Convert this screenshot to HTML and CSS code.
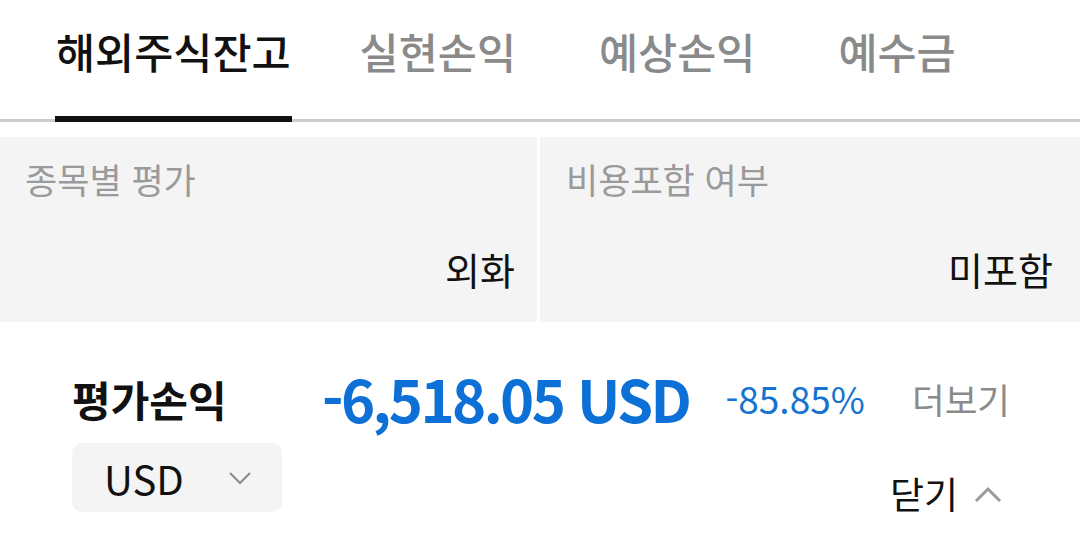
FILE: index.html
```html
<!DOCTYPE html>
<html lang="ko">
<head>
<meta charset="utf-8">
<link rel="stylesheet" href="styles.css">
</head>
<body>
<nav class="tabs">
  <div class="tab active">해외주식잔고</div>
  <div class="tab">실현손익</div>
  <div class="tab">예상손익</div>
  <div class="tab">예수금</div>
</nav>
<section class="panel">
  <div class="cell">
    <div class="cell-label">종목별 평가</div>
    <div class="cell-value">외화</div>
  </div>
  <div class="cell">
    <div class="cell-label">비용포함 여부</div>
    <div class="cell-value">미포함</div>
  </div>
</section>
<section class="summary">
  <div class="row">
    <div class="sum-label">평가손익</div>
    <div class="sum-value">-6,518.05 USD</div>
    <div class="sum-rate">-85.85%</div>
    <div class="more">더보기</div>
  </div>
  <div class="row row2">
    <div class="select">
      <span class="select-text">USD</span>
      <svg class="chev-down" width="24" height="14" viewBox="0 0 24 14"><path d="M2 2 L12 12 L22 2" fill="none" stroke="#8a8a8a" stroke-width="2"/></svg>
    </div>
    <div class="close">
      <span>닫기</span>
      <svg class="chev-up" width="28" height="17" viewBox="0 0 28 17"><path d="M2 15 L14 3 L26 15" fill="none" stroke="#9a9a9a" stroke-width="3"/></svg>
    </div>
  </div>
</section>
</body>
</html>
```
FILE: styles.css
```css
* { box-sizing: border-box; }
body {
  margin: 0;
  background: #fff;
  font-family: "Noto Sans CJK KR", "Noto Sans", sans-serif;
  color: #111;
  width: 1080px;
}
.tabs {
  display: flex;
  gap: 69px;
  padding-left: 56px;
  height: 122px;
  border-bottom: 3px solid #cdcdcd;
}
.tab {
  position: relative;
  font-size: 42.5px;
  font-weight: 500;
  color: #8a8a8a;
  padding-top: 22px;
  line-height: 58px;
  margin-right: 14px;
}
.tab.active {
  color: #111;
  margin-right: 0;
}
.tab.active::after {
  content: "";
  position: absolute;
  left: -1px;
  right: -1px;
  bottom: -3px;
  height: 6px;
  background: #111;
}
.panel {
  margin-top: 15px;
  display: flex;
  gap: 3px;
  height: 185px;
}
.cell {
  flex: 1;
  background: #f4f4f4;
  padding: 17px 24px 0 25px;
  display: flex;
  flex-direction: column;
}
.cell:first-child { flex: 0 0 537px; padding-right: 22px; }
.cell:last-child { padding-left: 26px; padding-right: 27px; }
.cell-label {
  font-size: 35px;
  color: #9a9a9a;
  line-height: 50px;
}
.cell-value {
  margin-top: 38px;
  font-size: 38px;
  line-height: 54px;
  text-align: right;
  color: #111;
}
.summary {
  padding: 46px 0 0 72px;
}
.row {
  display: flex;
  align-items: center;
  height: 60px;
}
.sum-label {
  width: 250px;
  font-size: 42px;
  font-weight: 700;
  color: #111;
}
.sum-value {
  font-size: 58px;
  font-weight: 700;
  color: #0d70d6;
  letter-spacing: -2.6px;
}
.sum-rate {
  margin-left: 36px;
  font-size: 37px;
  color: #1573d2;
}
.more {
  margin-left: auto;
  margin-right: 70px;
  font-size: 35.5px;
  color: #8a8a8a;
}
.row2 {
  margin-top: 15px;
  height: auto;
  align-items: flex-start;
  justify-content: space-between;
}
.select {
  width: 210px;
  height: 69px;
  background: #f4f4f4;
  border-radius: 10px;
  display: flex;
  align-items: center;
  padding-left: 32px;
}
.select-text {
  font-size: 40px;
  color: #111;
  width: 124px;
}
.close {
  display: flex;
  align-items: center;
  margin-top: 24px;
  margin-right: 78px;
  font-size: 37px;
  color: #111;
  gap: 16px;
  height: 52px;
}
.chev-up { margin-top: 2px; }
```
